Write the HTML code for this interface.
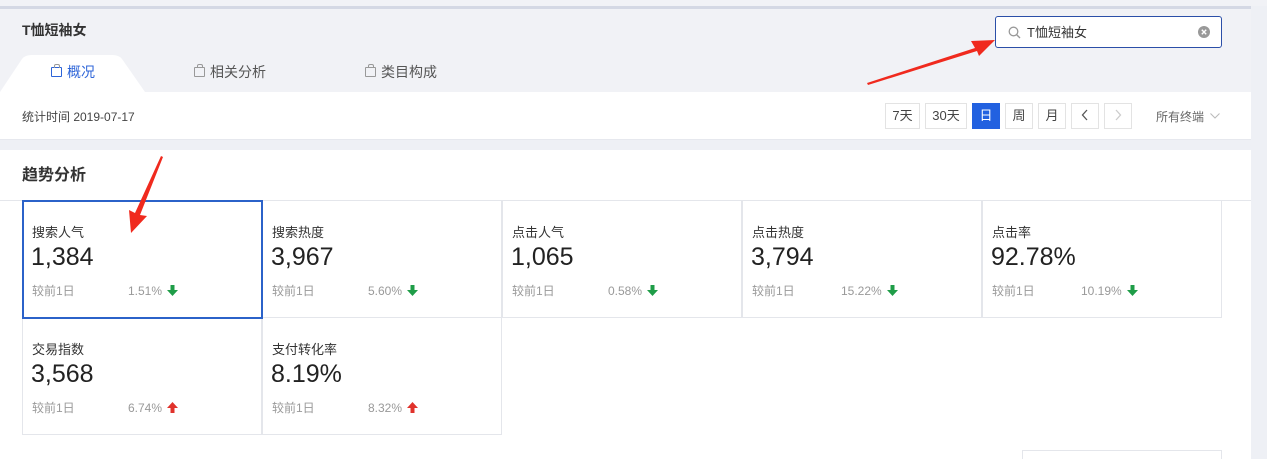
<!DOCTYPE html>
<html><head><meta charset="utf-8"><style>
*{margin:0;padding:0;box-sizing:border-box}
html,body{width:1267px;height:459px;overflow:hidden}
body{background:#eef0f5;font-family:"Liberation Sans","Noto Sans CJK SC",sans-serif;position:relative;color:#333;line-height:1}
.abs{position:absolute}
.top{left:0;top:0;width:1267px;height:6px;background:#f1f2f6}
.line{left:0;top:6px;width:1251px;height:3px;background:#d4d8e4}
.hdr{left:0;top:9px;width:1251px;height:83px;background:#f1f2f6}
.title{left:22px;top:23px;font-size:14px;font-weight:bold;color:#333}
.tab{top:65px;font-size:14px;color:#555}
.tabbg{left:0;top:55px;width:145px;height:37px}
.bag{display:inline-block;width:11px;height:10px;border:1.3px solid #999;border-radius:1px;margin-right:5px;position:relative;top:0px}
.bag:before{content:"";position:absolute;left:2px;top:-4px;width:4px;height:3px;border:1.3px solid #999;border-bottom:none;border-radius:2px 2px 0 0}
.search{left:995px;top:16px;width:227px;height:32px;background:#fff;border:1px solid #2b4fa8;border-radius:3px}
.bar{left:0;top:92px;width:1251px;height:48px;background:#fff;border-bottom:1px solid #e6e8ee}
.btn{top:103px;height:26px;border:1px solid #e3e3e3;background:#fff;font-size:13px;color:#444;text-align:center;line-height:24px}
.sec{left:0;top:150px;width:1251px;height:309px;background:#fff}
.cell{position:absolute;width:240px;height:118px;border:1px solid #e4e6eb;background:#fff}
.cell .l{position:absolute;left:9px;top:25px;font-size:13px;color:#333;line-height:13px}
.cell .v{position:absolute;left:8px;top:44px;font-size:25px;color:#222;line-height:25px;font-weight:300}
.cell .c{position:absolute;left:9px;top:84px;font-size:12px;color:#999;line-height:12px}
.cell .p{position:absolute;left:105px;top:84px;font-size:12px;color:#999;line-height:12px}
.dn{display:inline-block;margin-left:5px;vertical-align:-1px}
</style></head><body>
<div class="abs top"></div><div class="abs line"></div>
<div class="abs hdr"></div>
<div class="abs title">T恤短袖女</div>
<svg class="abs tabbg" viewBox="0 0 145 37"><path d="M0 37 L22 4 Q25 0 32 0 L112 0 Q119 0 122 4 L145 37Z" fill="#fff"/></svg>
<div class="abs tab" style="left:51px;color:#2d64d8"><span class="bag" style="border-color:#2d64d8"></span>概况</div>
<div class="abs tab" style="left:194px"><span class="bag"></span>相关分析</div>
<div class="abs tab" style="left:365px"><span class="bag"></span>类目构成</div>
<div class="abs search">
<svg class="abs" style="left:12px;top:9px" width="13" height="13" viewBox="0 0 13 13"><circle cx="5.5" cy="5.5" r="4.3" fill="none" stroke="#999" stroke-width="1.3"/><path d="M8.7 8.7L12 12" stroke="#999" stroke-width="1.4"/></svg>
<span class="abs" style="left:31px;top:9px;font-size:13px;color:#333">T恤短袖女</span>
<svg class="abs" style="left:202px;top:9px" width="12" height="12" viewBox="0 0 12 12"><circle cx="6" cy="6" r="6" fill="#999"/><path d="M3.8 3.8L8.2 8.2M8.2 3.8L3.8 8.2" stroke="#fff" stroke-width="1.4"/></svg>
</div>
<div class="abs bar"></div>
<div class="abs" style="left:22px;top:111px;font-size:12px;color:#444">统计时间 2019-07-17</div>
<div class="abs btn" style="left:885px;width:35px">7天</div>
<div class="abs btn" style="left:925px;width:42px">30天</div>
<div class="abs btn" style="left:972px;width:28px;background:#2261e0;border-color:#2261e0;color:#fff">日</div>
<div class="abs btn" style="left:1005px;width:28px">周</div>
<div class="abs btn" style="left:1038px;width:28px">月</div>
<div class="abs btn" style="left:1071px;width:28px"><svg width="8" height="12" viewBox="0 0 8 12" style="vertical-align:-1px"><path d="M6 1L1.5 6L6 11" fill="none" stroke="#555" stroke-width="1.3"/></svg></div>
<div class="abs btn" style="left:1104px;width:28px"><svg width="8" height="12" viewBox="0 0 8 12" style="vertical-align:-1px"><path d="M2 1L6.5 6L2 11" fill="none" stroke="#ccc" stroke-width="1.3"/></svg></div>
<div class="abs" style="left:1156px;top:111px;font-size:12px;color:#666">所有终端 <svg width="10" height="6" viewBox="0 0 10 6" style="margin-left:3px;vertical-align:2px"><path d="M0.5 0.5L5 5L9.5 0.5" fill="none" stroke="#bbb" stroke-width="1.1"/></svg></div>
<div class="abs sec"></div>
<div class="abs" style="left:22px;top:168px;font-size:16px;font-weight:bold;color:#333">趋势分析</div>
<div class="abs" style="left:0;top:200px;width:1251px;height:1px;background:#e4e6eb"></div>
<div class="abs" style="left:0;top:0">
<div class="cell" style="left:262px;top:200px"><div class="l">搜索热度</div><div class="v">3,967</div><div class="c">较前1日</div><div class="p">5.60%<svg class="dn" width="11" height="11" viewBox="0 0 11 11"><path d="M3.5 0H7.5V5H11L5.5 11L0 5H3.5Z" fill="#1f9d48"/></svg></div></div>
<div class="cell" style="left:502px;top:200px"><div class="l">点击人气</div><div class="v">1,065</div><div class="c">较前1日</div><div class="p">0.58%<svg class="dn" width="11" height="11" viewBox="0 0 11 11"><path d="M3.5 0H7.5V5H11L5.5 11L0 5H3.5Z" fill="#1f9d48"/></svg></div></div>
<div class="cell" style="left:742px;top:200px"><div class="l">点击热度</div><div class="v">3,794</div><div class="c">较前1日</div><div class="p" style="left:98px">15.22%<svg class="dn" width="11" height="11" viewBox="0 0 11 11"><path d="M3.5 0H7.5V5H11L5.5 11L0 5H3.5Z" fill="#1f9d48"/></svg></div></div>
<div class="cell" style="left:982px;top:200px"><div class="l">点击率</div><div class="v">92.78%</div><div class="c">较前1日</div><div class="p" style="left:98px">10.19%<svg class="dn" width="11" height="11" viewBox="0 0 11 11"><path d="M3.5 0H7.5V5H11L5.5 11L0 5H3.5Z" fill="#1f9d48"/></svg></div></div>
<div class="cell" style="left:22px;top:317px"><div class="l">交易指数</div><div class="v">3,568</div><div class="c">较前1日</div><div class="p">6.74%<svg class="dn" width="11" height="11" viewBox="0 0 11 11"><path d="M3.5 11H7.5V6H11L5.5 0L0 6H3.5Z" fill="#e0322b"/></svg></div></div>
<div class="cell" style="left:262px;top:317px"><div class="l">支付转化率</div><div class="v">8.19%</div><div class="c">较前1日</div><div class="p">8.32%<svg class="dn" width="11" height="11" viewBox="0 0 11 11"><path d="M3.5 11H7.5V6H11L5.5 0L0 6H3.5Z" fill="#e0322b"/></svg></div></div>
<div class="cell" style="left:22px;top:200px;border:2px solid #2b62c9;width:241px;height:119px"><div class="l" style="left:8px;top:24px">搜索人气</div><div class="v" style="left:7px;top:43px">1,384</div><div class="c" style="left:8px;top:83px">较前1日</div><div class="p" style="left:104px;top:83px">1.51%<svg class="dn" width="11" height="11" viewBox="0 0 11 11"><path d="M3.5 0H7.5V5H11L5.5 11L0 5H3.5Z" fill="#1f9d48"/></svg></div></div>
</div>
<div class="abs" style="left:1022px;top:450px;width:200px;height:20px;border:1px solid #e4e6eb;background:#fff"></div>
<svg class="abs" style="left:0;top:0" width="1267" height="459">
<path d="M867 83 L975 48 L971 41 L995 40 L979 56 L977 51 L868 85Z" fill="#f02a1e"/>
<path d="M163 157 L140 215 L147 216 L131 233 L129 210 L135 213 L161 156Z" fill="#f02a1e"/>
</svg>
</body></html>
